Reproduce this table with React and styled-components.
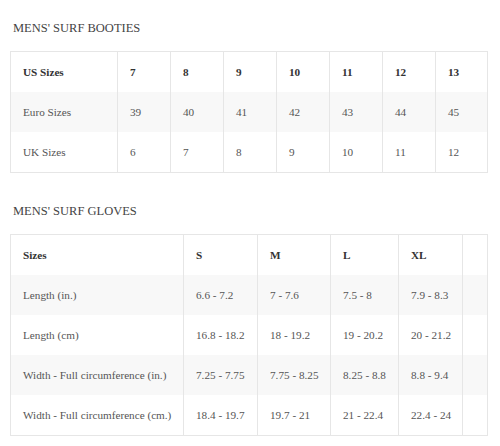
import React from 'react';
import styled, { createGlobalStyle } from 'styled-components';

const GlobalStyle = createGlobalStyle`
  body {
    margin: 0;
    background: #fff;
    font-family: "Liberation Serif", "Times New Roman", serif;
  }
`;

const Page = styled.div`
  padding: 18px 13px 0 10px;
`;

const Section = styled.section`
  margin-bottom: 28px;
`;

const Title = styled.h2`
  margin: 0 0 13px 3px;
  font-size: 12.5px;
  line-height: 20px;
  font-weight: normal;
  color: #444;
`;

const Table = styled.table`
  width: 477px;
  table-layout: fixed;
  border-collapse: collapse;
  border: 1px solid #e6e6e6;
  font-size: 11.2px;
`;

const Row = styled.tr`
  background: ${(p) => (p.$striped ? '#f8f8f8' : '#fff')};
`;

const Cell = styled.td`
  height: 40px;
  padding: 0 12px;
  border-right: 1px solid #e6e6e6;
  color: ${(p) => (p.$head ? '#333' : '#555')};
  font-weight: ${(p) => (p.$head ? 'bold' : 'normal')};
  white-space: nowrap;
  vertical-align: middle;
`;

const booties = [
  ['US Sizes', '7', '8', '9', '10', '11', '12', '13'],
  ['Euro Sizes', '39', '40', '41', '42', '43', '44', '45'],
  ['UK Sizes', '6', '7', '8', '9', '10', '11', '12'],
];

const gloves = [
  ['Sizes', 'S', 'M', 'L', 'XL', ''],
  ['Length (in.)', '6.6 - 7.2', '7 - 7.6', '7.5 - 8', '7.9 - 8.3', ''],
  ['Length (cm)', '16.8 - 18.2', '18 - 19.2', '19 - 20.2', '20 - 21.2', ''],
  ['Width - Full circumference (in.)', '7.25 - 7.75', '7.75 - 8.25', '8.25 - 8.8', '8.8 - 9.4', ''],
  ['Width - Full circumference (cm.)', '18.4 - 19.7', '19.7 - 21', '21 - 22.4', '22.4 - 24', ''],
];

const SizeTable = ({ widths, rows }) => (
  <Table>
    <colgroup>
      {widths.map((w, i) => (
        <col key={i} style={{ width: w }} />
      ))}
    </colgroup>
    <tbody>
      {rows.map((row, r) => (
        <Row key={r} $striped={r % 2 === 1}>
          {row.map((c, i) => (
            <Cell key={i} $head={r === 0}>{c}</Cell>
          ))}
        </Row>
      ))}
    </tbody>
  </Table>
);

export default function App() {
  return (
    <Page>
      <GlobalStyle />
      <Section>
        <Title>MENS' SURF BOOTIES</Title>
        <SizeTable widths={[107, 53, 53, 53, 53, 53, 53, 52]} rows={booties} />
      </Section>
      <Section>
        <Title>MENS' SURF GLOVES</Title>
        <SizeTable widths={[173, 74, 73, 68, 64, 25]} rows={gloves} />
      </Section>
    </Page>
  );
}
